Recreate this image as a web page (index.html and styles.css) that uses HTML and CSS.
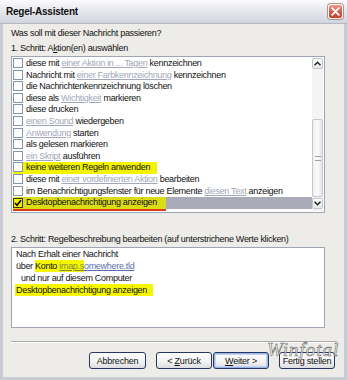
FILE: index.html
```html
<!DOCTYPE html>
<html lang="de">
<head>
<meta charset="utf-8">
<title>Regel-Assistent</title>
<link rel="stylesheet" href="styles.css">
</head>
<body>
<div class="window">
  <div class="titlebar">
    <span class="title">Regel-Assistent</span>
    <span class="close"><svg width="9" height="9" viewBox="0 0 9 9"><path d="M1.2 1.2 L7.8 7.8 M7.8 1.2 L1.2 7.8" stroke="#fff" stroke-width="1.8" stroke-linecap="round"/></svg></span>
  </div>
  <div class="content">
    <p class="label">Was soll mit dieser Nachricht passieren?</p>
    <p class="label">1. Schritt: A<u>k</u>tion(en) auswählen</p>
    <div class="listbox">
      <ul class="rows">
        <li class="row"><span class="cb"></span>diese mit <span class="lnk">einer Aktion in ... Tagen</span> kennzeichnen</li>
        <li class="row"><span class="cb"></span>Nachricht mit <span class="lnk">einer Farbkennzeichnung</span> kennzeichnen</li>
        <li class="row"><span class="cb"></span>die Nachrichtenkennzeichnung löschen</li>
        <li class="row"><span class="cb"></span>diese als <span class="lnk">Wichtigkeit</span> markieren</li>
        <li class="row"><span class="cb"></span>diese drucken</li>
        <li class="row"><span class="cb"></span><span class="lnk">einen Sound</span> wiedergeben</li>
        <li class="row"><span class="cb"></span><span class="lnk">Anwendung</span> starten</li>
        <li class="row"><span class="cb"></span>als gelesen markieren</li>
        <li class="row"><span class="cb"></span><span class="lnk">ein Skript</span> ausführen</li>
        <li class="row"><span class="hl hl-a"><span class="cb"></span>keine weiteren Regeln anwenden</span></li>
        <li class="row"><span class="cb"></span>diese mit <span class="lnk">einer vordefinierten Aktion</span> bearbeiten</li>
        <li class="row"><span class="cb"></span>im Benachrichtigungsfenster für neue Elemente <span class="lnk">diesen Text</span> anzeigen</li>
        <li class="row selected"><span class="hl hl-b"><span class="cb checked"><svg width="8" height="8" viewBox="0 0 8 8"><path d="M1 4 L3 6.3 L7 1.2" fill="none" stroke="#000" stroke-width="1.6"/></svg></span>Desktopbenachrichtigung anzeigen</span></li>
      </ul>
      <div class="scrollbar">
        <span class="sbtn"><svg width="7" height="5" viewBox="0 0 7 5"><path d="M0.5 4.2 L3.5 1.2 L6.5 4.2" fill="none" stroke="#222" stroke-width="1.5"/></svg></span>
        <span class="track-top"></span>
        <span class="thumb"><span class="grip"></span></span>
        <span class="sbtn down"><svg width="7" height="5" viewBox="0 0 7 5"><path d="M0.5 0.8 L3.5 3.8 L6.5 0.8" fill="none" stroke="#222" stroke-width="1.5"/></svg></span>
      </div>
    </div>
    <p class="label step2">2. Schritt: Re<u>g</u>elbeschreibung bearbeiten (auf unterstrichene Werte klicken)</p>
    <div class="descbox">
      <p class="dline">Nach Erhalt einer Nachricht</p>
      <p class="dline">über <span class="yel konto">Konto <span class="dlnk">imap.s</span></span><span class="dlnk">omewhere.tld</span></p>
      <p class="dline indent">und nur auf diesem Computer</p>
      <p class="dline"><span class="yel pad">Desktopbenachrichtigung anzeigen</span></p>
    </div>
    <div class="sep"></div>
    <div class="buttons">
      <button class="btn b-cancel">Abbrechen</button>
      <button class="btn b-back">&lt; <u>Z</u>urück</button>
      <button class="btn b-next default"><u>W</u>eiter &gt;</button>
      <button class="btn b-finish">Fertig stellen</button>
    </div>
  </div>
  <span class="watermark">Winfotal</span>
</div>
</body>
</html>
```
FILE: styles.css
```css
* { box-sizing: border-box; }
html, body { margin: 0; padding: 0; }
body {
  width: 347px;
  height: 380px;
  overflow: hidden;
  font-family: "Liberation Sans", Arial, sans-serif;
  font-size: 9px;
  letter-spacing: -0.3px;
  color: #111;
  background: #ecebe6;
}
.window {
  position: relative;
  width: 347px;
  height: 380px;
  border: 3px solid #c9cbd3;
  border-top: 0;
  background: #edece8;
  display: flex;
  flex-direction: column;
}
.titlebar {
  height: 24px;
  flex: none;
  margin: 0 -3px;
  padding: 0 4px 0 6px;
  display: flex;
  align-items: center;
  justify-content: space-between;
  background: linear-gradient(#fbfbfc, #e6e7ec 50%, #d3d5de);
  border-bottom: 1px solid #b4b7c2;
}
.title {
  font-weight: bold;
  font-size: 10px;
  letter-spacing: -0.25px;
  color: #111;
}
.close {
  width: 15px;
  height: 15px;
  border-radius: 3px;
  border: 1px solid #fff;
  background: linear-gradient(#eb9a8a, #d45a43 55%, #c4442f);
  display: flex;
  align-items: center;
  justify-content: center;
  box-shadow: 0 0 0 1px #b98c88;
}
.content {
  flex: 1;
  padding: 2px 7px 0 8px;
  display: flex;
  flex-direction: column;
}
.label {
  margin: 0;
  height: 15px;
  line-height: 15px;
  white-space: nowrap;
}
.listbox {
  width: 314px;
  height: 157px;
  flex: none;
  border: 1px solid #9ea5b3;
  background: #fff;
  display: flex;
  padding: 1px;
}
.rows {
  list-style: none;
  margin: 0;
  padding: 0;
  flex: 1;
  min-width: 0;
  overflow: hidden;
}
.row {
  height: 11.6px;
  line-height: 11.6px;
  white-space: nowrap;
}
.cb {
  display: inline-flex;
  align-items: center;
  justify-content: center;
  width: 10px;
  height: 10px;
  border: 1px solid #8595ab;
  background: #fff;
  margin-right: 3px;
  vertical-align: -2px;
}
.lnk {
  color: #a3a6ba;
  text-decoration: underline;
}
.hl {
  display: inline-block;
  background: #f4f400;
  height: 11.6px;
  vertical-align: top;
}
.hl-a { width: 144px; }
.selected {
  background: #a9abb8;
}
.hl-b {
  width: 153px;
  background: #dcdc14;
  box-shadow: 0 2px 0 #e2381a;
}
.checked { border-color: #3b3b10; background: #f1f100; }
.scrollbar {
  width: 11px;
  flex: none;
  display: flex;
  flex-direction: column;
  background: #f4f4f4;
}
.sbtn {
  height: 11px;
  flex: none;
  border: 1px solid #c2c5cc;
  background: linear-gradient(#fff, #e6e7ea);
  display: flex;
  align-items: center;
  justify-content: center;
  border-radius: 2px;
}
.down { margin-bottom: 2px; }
.track-top { height: 50px; flex: none; }
.thumb {
  flex: 1;
  margin-bottom: 1px;
  border: 1px solid #c6c8ce;
  background: linear-gradient(90deg, #eef0f3, #fbfbfc 50%, #e3e5ea);
  border-radius: 2px;
  display: flex;
  align-items: center;
  justify-content: center;
}
.grip {
  width: 6px;
  height: 5px;
  border-top: 1px solid #9da1aa;
  border-bottom: 1px solid #9da1aa;
}
.step2 { margin-top: 19px; }
.descbox {
  width: 314px;
  height: 81px;
  flex: none;
  border: 1px solid #9ea5b3;
  background: #fff;
  padding: 0 4px;
}
.dline {
  margin: 0;
  height: 12px;
  line-height: 12px;
  white-space: nowrap;
}
.indent { padding-left: 5px; }
.yel { background: #f6f600; }
.konto { padding: 1px 0; }
.pad { display: inline-block; padding: 0 6px 0 1px; margin-left: -1px; }
.dlnk { color: #5a6fb0; text-decoration: underline; }
.yel .dlnk { color: #7f8a40; }
.sep {
  margin-top: 13px;
  height: 2px;
  flex: none;
  border-top: 1px solid #a8a9ad;
  border-bottom: 1px solid #fff;
  width: 326px;
}
.buttons {
  margin-top: 9px;
  display: flex;
  justify-content: flex-end;
  padding-right: 2px;
}
.btn {
  font-family: inherit;
  font-size: 9px;
  letter-spacing: -0.2px;
  white-space: nowrap;
  color: #111;
  width: 56px;
  height: 17px;
  padding: 0;
  border: 1px solid #233763;
  border-radius: 3px;
  background: linear-gradient(#fdfdfd, #f2f2f2 60%, #dcdce2);
}
.b-cancel { width: 57px; margin-right: 10px; }
.b-back { margin-right: 1px; }
.b-next { margin-right: 10px; }
.default { box-shadow: inset 0 0 0 1px #9bb4e6, inset 0 0 0 2px #c6d4f3; }
.watermark {
  position: absolute;
  left: 264px;
  top: 339px;
  font-family: "Liberation Serif", serif;
  font-style: italic;
  font-size: 19px;
  letter-spacing: 1px;
  color: #fff;
  -webkit-text-stroke: 0.6px #555;
  opacity: 0.85;
}
```
